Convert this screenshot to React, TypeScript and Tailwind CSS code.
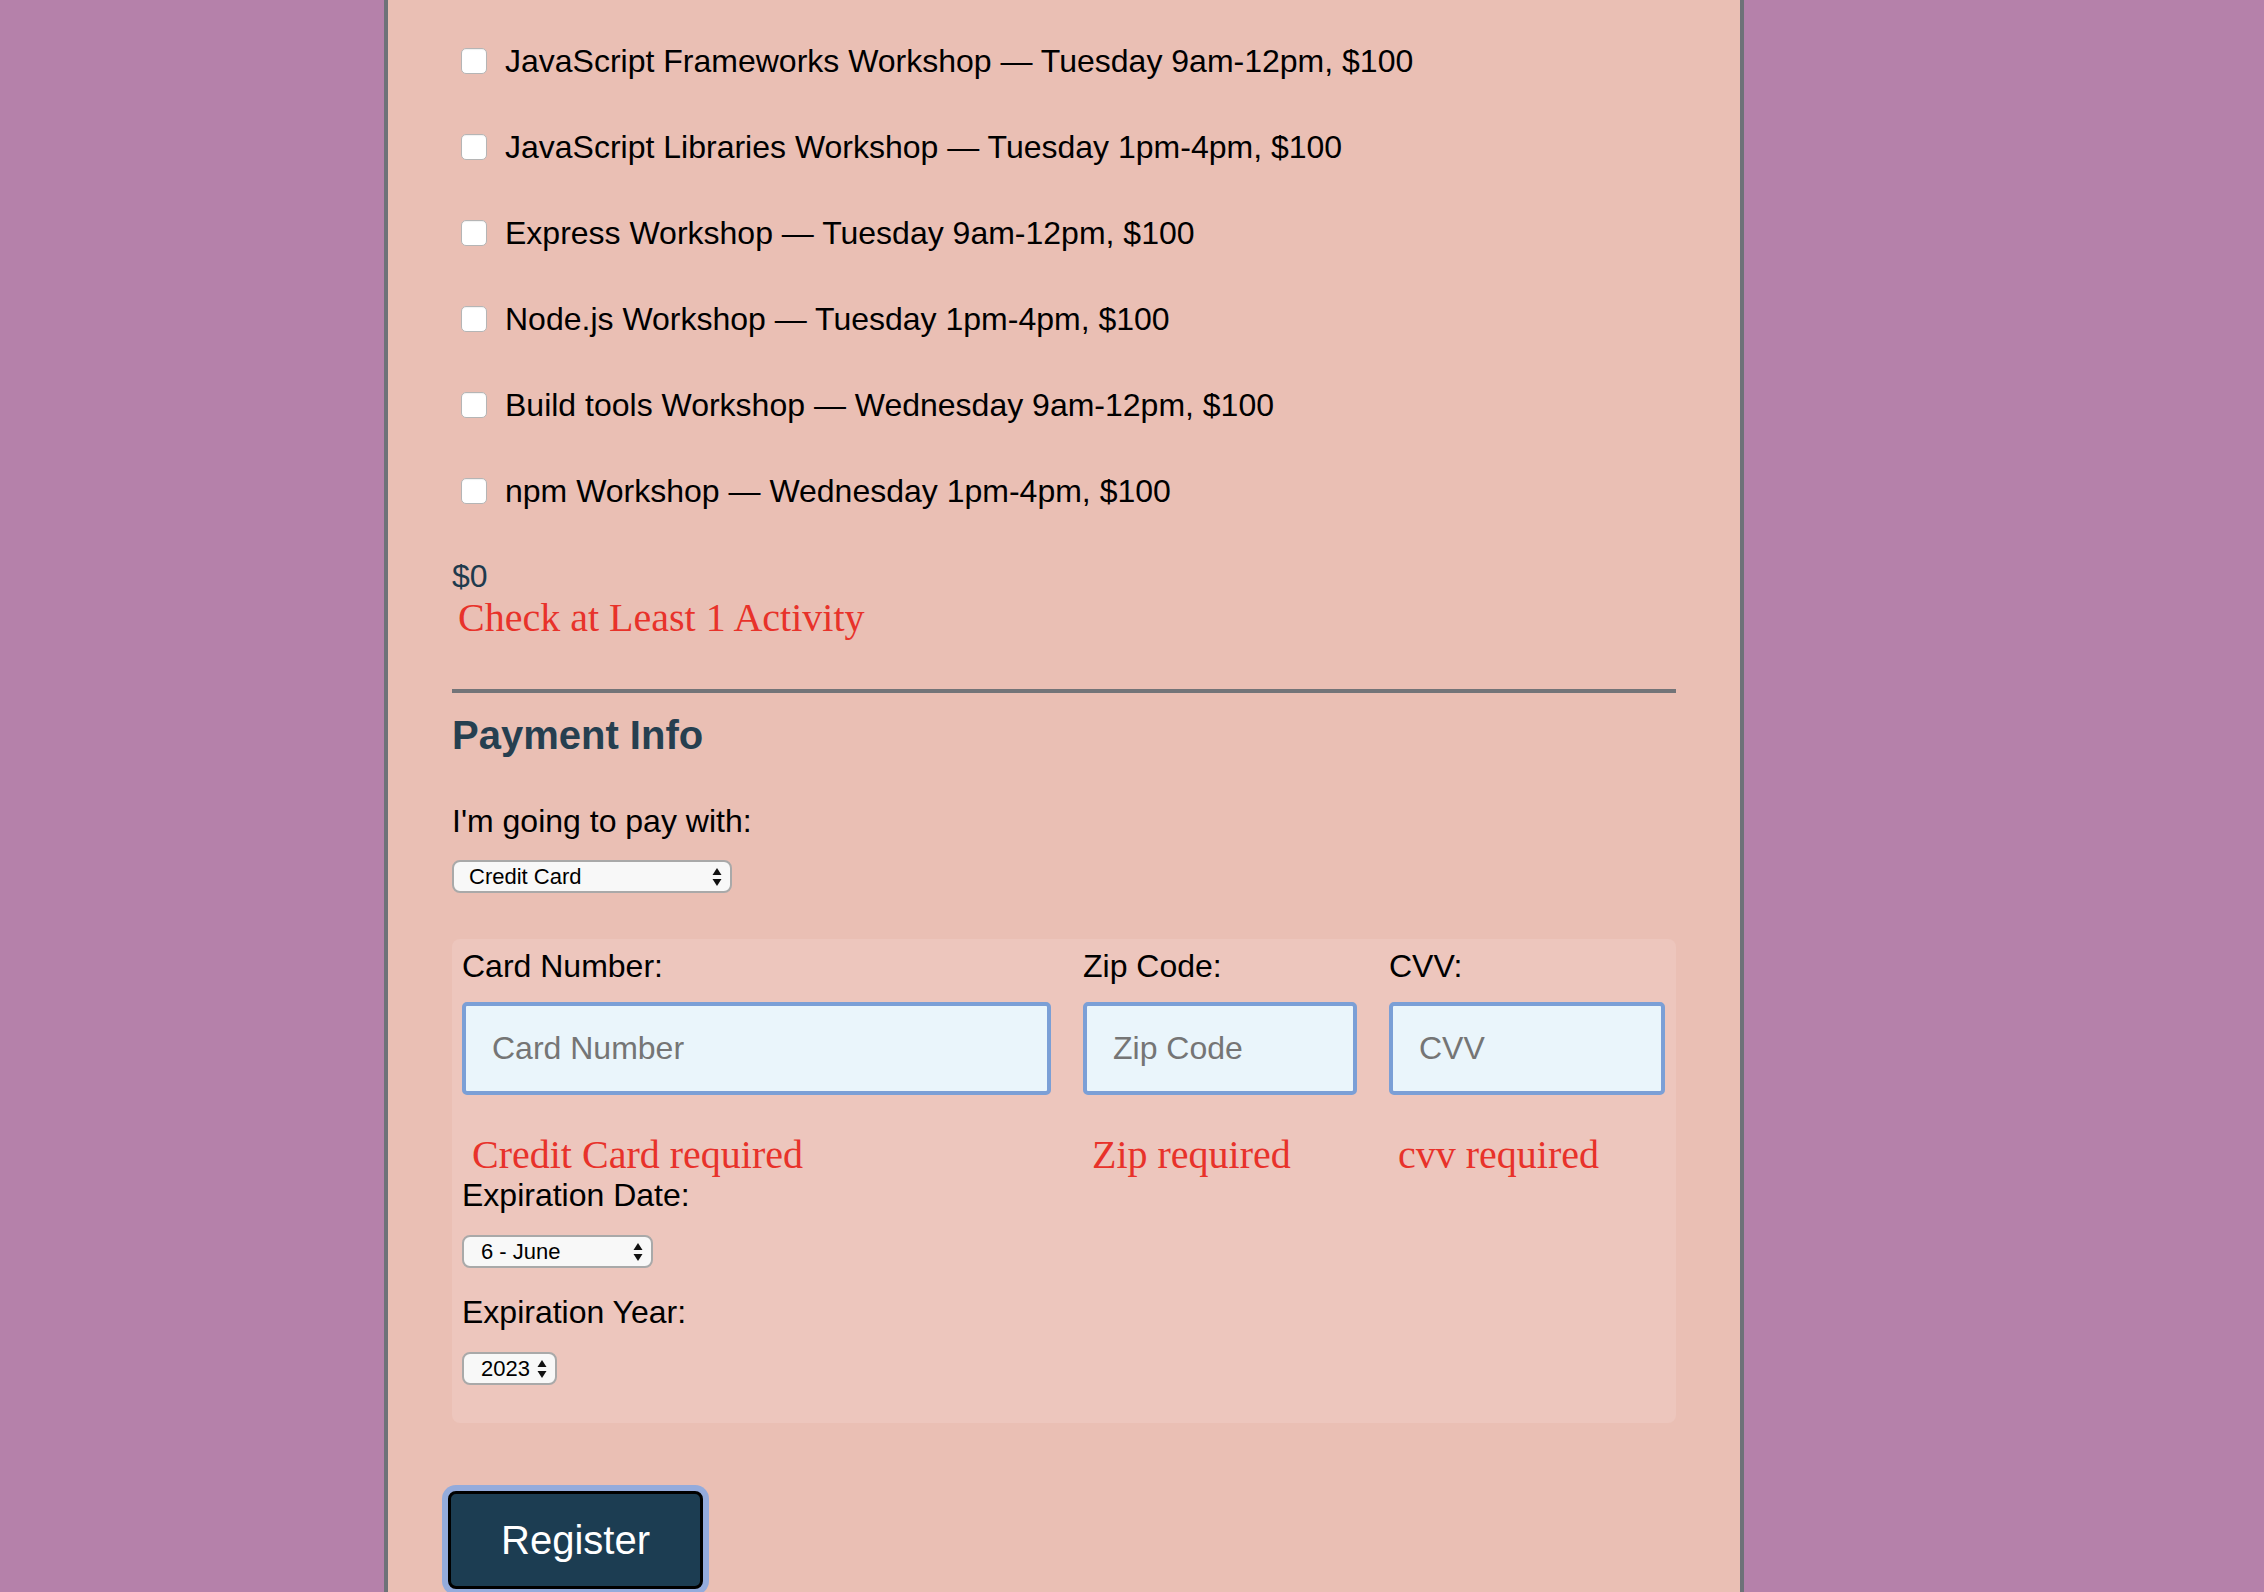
import React from "react";

const activities = [
  "JavaScript Frameworks Workshop — Tuesday 9am-12pm, $100",
  "JavaScript Libraries Workshop — Tuesday 1pm-4pm, $100",
  "Express Workshop — Tuesday 9am-12pm, $100",
  "Node.js Workshop — Tuesday 1pm-4pm, $100",
  "Build tools Workshop — Wednesday 9am-12pm, $100",
  "npm Workshop — Wednesday 1pm-4pm, $100",
];

function Arrows() {
  return (
    <svg
      width="10"
      height="20"
      viewBox="0 0 10 20"
      className="pointer-events-none absolute right-[10px] top-1/2 -translate-y-1/2"
    >
      <path d="M5 1 L9.5 8 L0.5 8 Z" fill="#111" />
      <path d="M5 19 L9.5 12 L0.5 12 Z" fill="#111" />
    </svg>
  );
}

function Select({
  value,
  width,
  pad,
}: {
  value: string;
  width: string;
  pad: string;
}) {
  return (
    <div className={`relative ${width}`}>
      <select
        defaultValue={value}
        className={`h-[33px] w-full appearance-none rounded-[8px] border-2 border-[#a9a9a9] bg-[#f8f8f8] text-[22px] leading-none text-black ${pad}`}
      >
        <option>{value}</option>
      </select>
      <Arrows />
    </div>
  );
}

function Field({ placeholder }: { placeholder: string }) {
  return (
    <input
      type="text"
      placeholder={placeholder}
      className="h-[93px] w-full rounded-[5px] border-4 border-[#7b9fd6] bg-[#eaf5fb] pl-[26px] text-[32px] text-black placeholder:text-[#757575]"
    />
  );
}

export default function App() {
  return (
    <div className="h-[1592px] overflow-hidden bg-[#b581aa] font-['Liberation_Sans',Arial,sans-serif]">
      <div className="ml-[384px] h-full w-[1360px] border-x-4 border-[#6e7278] bg-[#eabfb4] px-16 pt-[18px]">
        <div className="flex flex-col">
          {activities.map((label) => (
            <label key={label} className="flex h-[86px] items-center">
              <input
                type="checkbox"
                className="ml-[9px] h-[26px] w-[26px] appearance-none rounded-[5px] border border-[#b5b5b5] bg-white shadow-[inset_0_1px_1px_rgba(0,0,0,0.06)]"
              />
              <span className="ml-[18px] text-[32px] leading-[37px] text-black">
                {label}
              </span>
            </label>
          ))}
        </div>

        <p className="mt-[24px] text-[32px] leading-[37px] text-[#1f3a4d]">$0</p>
        <p className="ml-[6px] font-['Liberation_Serif','Times_New_Roman',serif] text-[40px] leading-[46px] text-[#e8322a]">
          Check at Least 1 Activity
        </p>

        <hr className="mt-[48px] border-0 border-t-4 border-[#737478]" />

        <h3 className="mt-[19px] text-[40px] font-bold leading-[46px] text-[#263f50]">
          Payment Info
        </h3>

        <p className="mt-[45px] text-[32px] leading-[37px] text-black">
          I'm going to pay with:
        </p>
        <div className="mt-[20px]">
          <Select value="Credit Card" width="w-[280px]" pad="pl-[15px]" />
        </div>

        <div className="mt-[46px] rounded-[8px] bg-[#edc6bd] pb-[38px] pl-[10px] pr-[11px] pt-[9px]">
          <div className="grid grid-cols-[589px_274px_276px] gap-x-[32px]">
            <span className="text-[32px] leading-[37px] text-black">Card Number:</span>
            <span className="text-[32px] leading-[37px] text-black">Zip Code:</span>
            <span className="text-[32px] leading-[37px] text-black">CVV:</span>

            <div className="mt-[17px]">
              <Field placeholder="Card Number" />
            </div>
            <div className="mt-[17px]">
              <Field placeholder="Zip Code" />
            </div>
            <div className="mt-[17px]">
              <Field placeholder="CVV" />
            </div>

            <span className="mt-[37px] pl-[10px] font-['Liberation_Serif','Times_New_Roman',serif] text-[40px] leading-[46px] text-[#e8322a]">
              Credit Card required
            </span>
            <span className="mt-[37px] pl-[9px] font-['Liberation_Serif','Times_New_Roman',serif] text-[40px] leading-[46px] text-[#e8322a]">
              Zip required
            </span>
            <span className="mt-[37px] pl-[9px] font-['Liberation_Serif','Times_New_Roman',serif] text-[40px] leading-[46px] text-[#e8322a]">
              cvv required
            </span>
          </div>

          <p className="-mt-px text-[32px] leading-[37px] text-black">Expiration Date:</p>
          <div className="mt-[21px]">
            <Select value="6 - June" width="w-[191px]" pad="pl-[17px]" />
          </div>

          <p className="mt-[26px] text-[32px] leading-[37px] text-black">Expiration Year:</p>
          <div className="mt-[21px]">
            <Select value="2023" width="w-[95px]" pad="pl-[17px]" />
          </div>
        </div>

        <button
          type="button"
          className="ml-[-4px] mt-[68px] h-[98px] w-[255px] rounded-[8px] border-[3px] border-black bg-[#1c3d52] text-[40px] text-white shadow-[0_0_0_6px_#94abdc]"
        >
          Register
        </button>
      </div>
    </div>
  );
}
